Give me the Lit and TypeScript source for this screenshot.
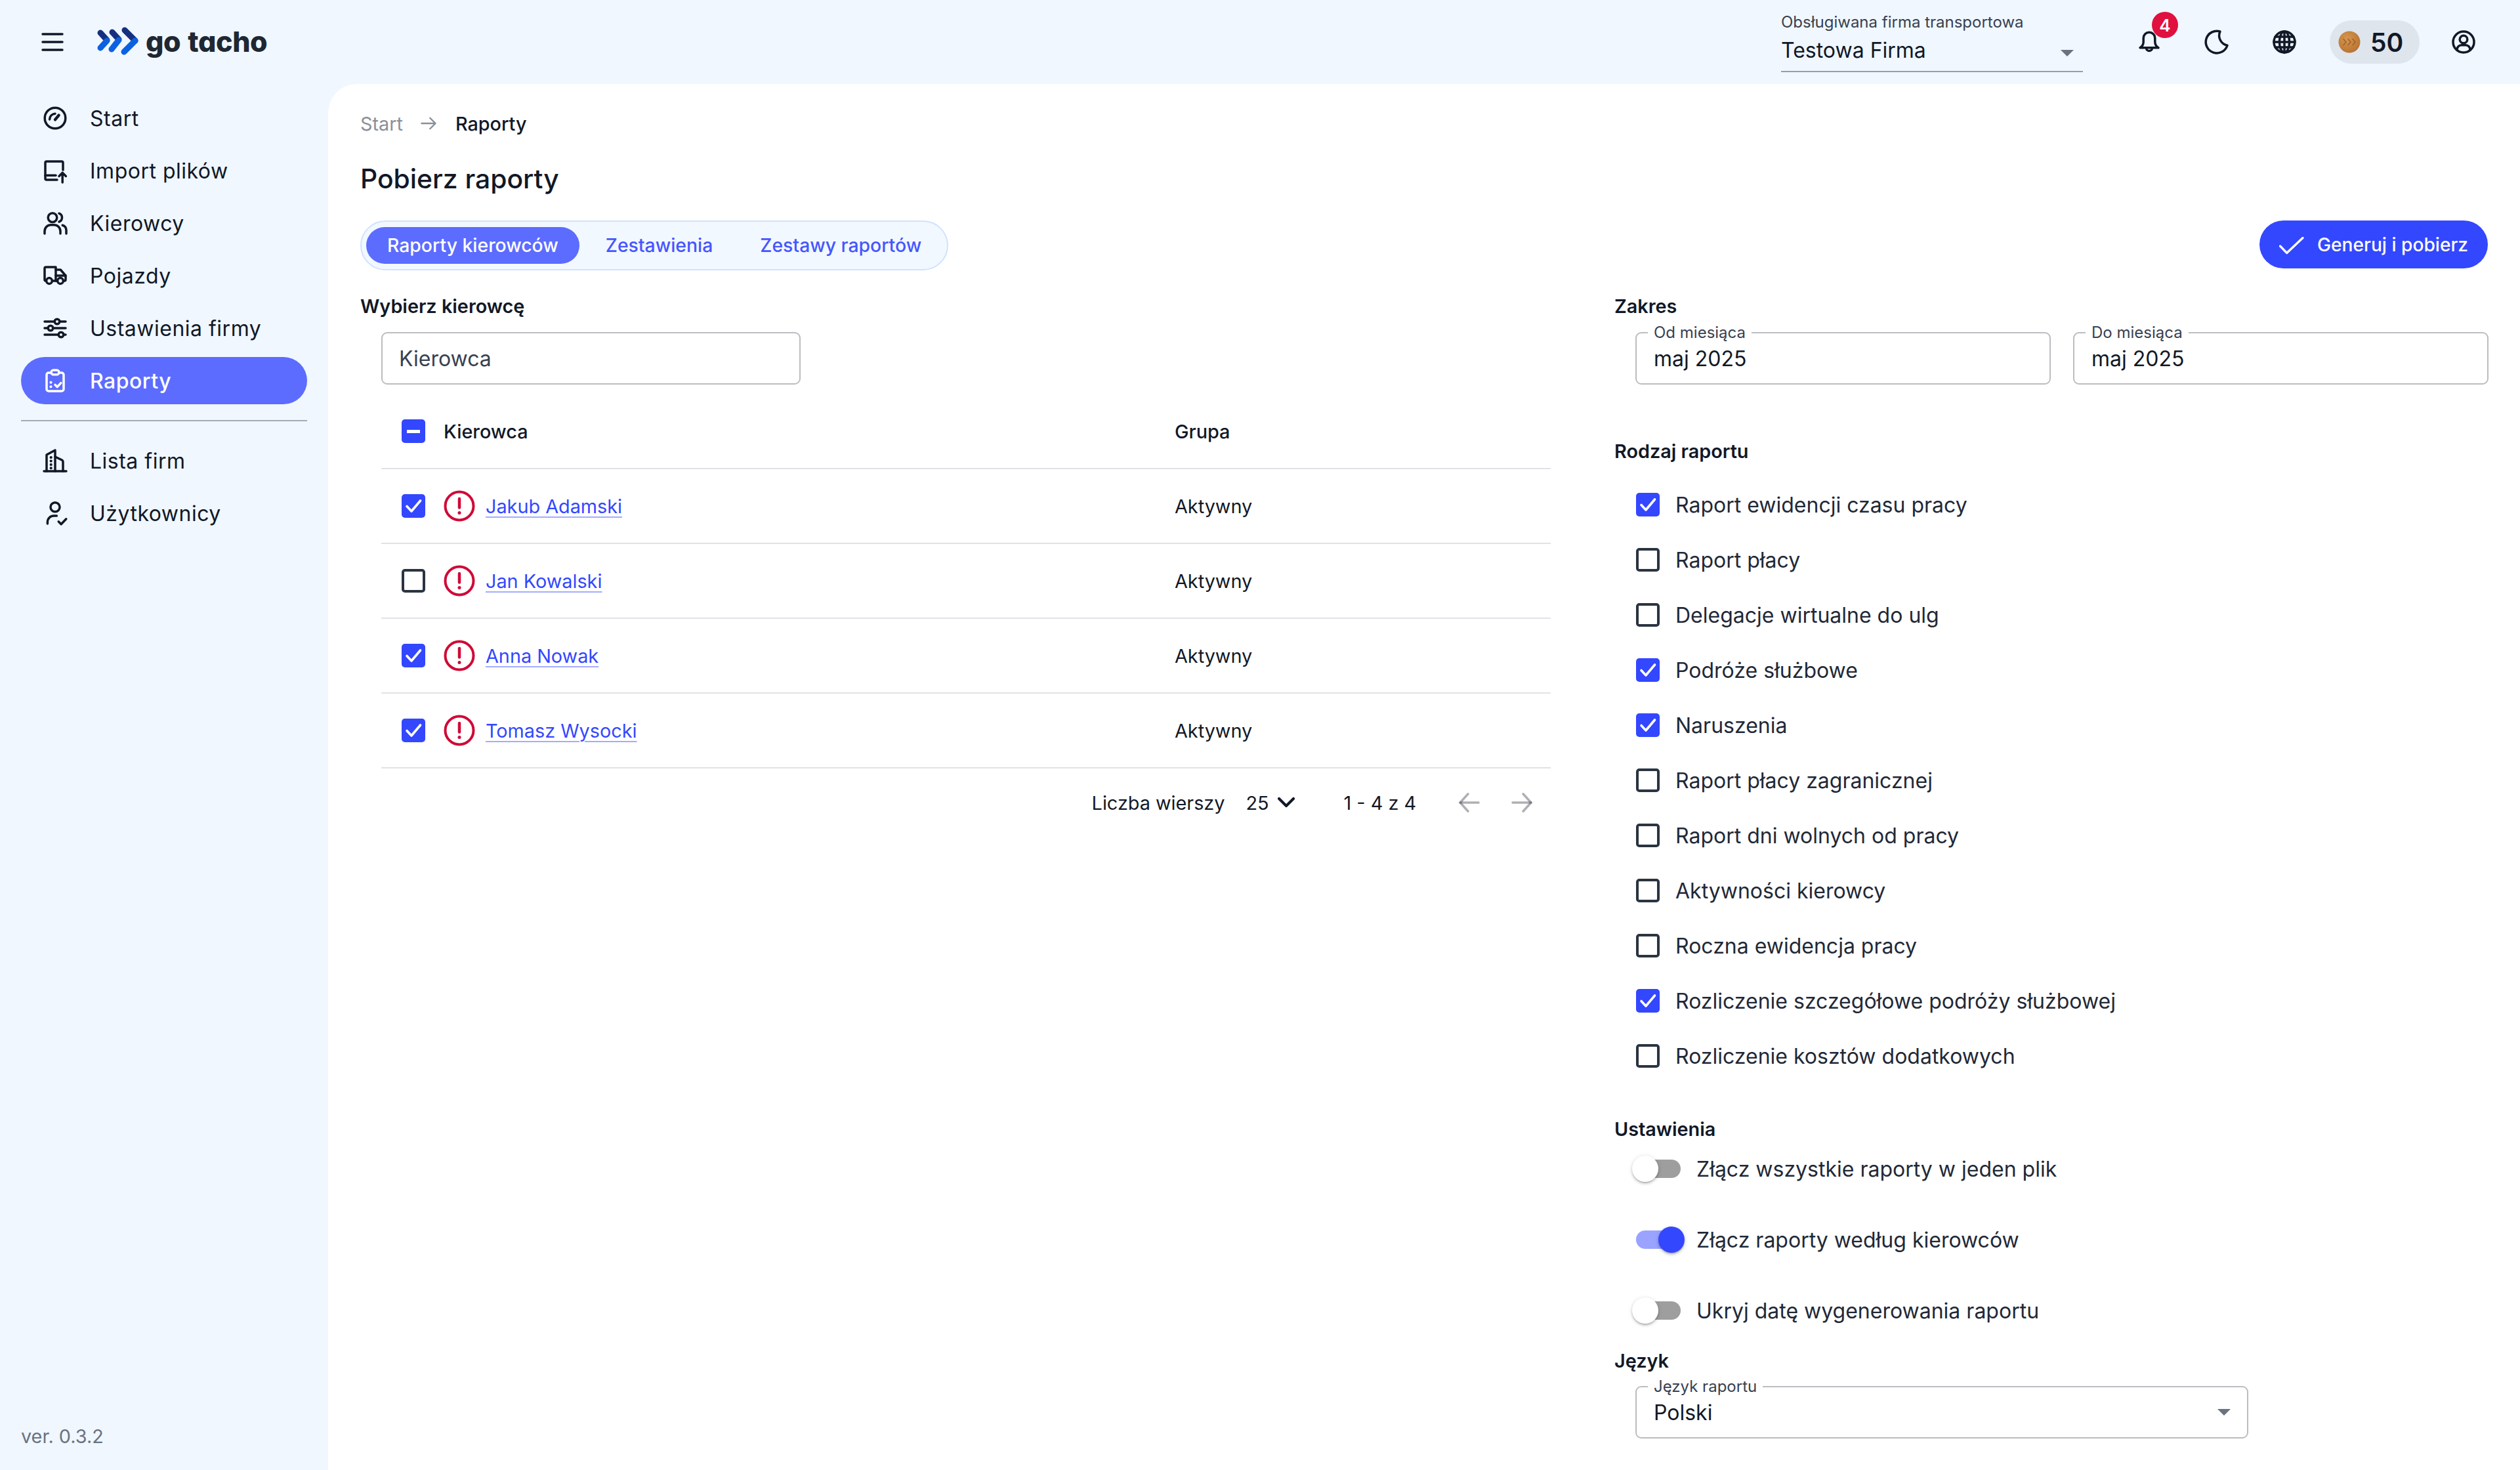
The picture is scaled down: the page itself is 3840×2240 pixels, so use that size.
import { LitElement, html, css, svg } from "lit";
import { customElement } from "lit/decorators.js";

const icon = (body: unknown, cls = "") =>
  html`<svg class="ico ${cls}" viewBox="0 0 24 24" fill="none" stroke="currentColor" stroke-width="1.75" stroke-linecap="round" stroke-linejoin="round">${body}</svg>`;

const I = {
  menu: svg`<path d="M4.5 6h15M4.5 12h15M4.5 18h15"/>`,
  gauge: svg`<circle cx="12" cy="12" r="7.9"/><path d="M7.8 13a4.4 4.4 0 0 1 4.2-4.4"/><path d="M12 13.2l2.8-3.4" stroke-width="2.2"/>`,
  upload: svg`<path d="M18 11.5V6a1 1 0 0 0-1-1H5.5a1 1 0 0 0-1 1v12a1 1 0 0 0 1 1h8"/><path d="M4.5 15.6h8"/><path d="M17.6 21v-7.4M15 16.2l2.6-2.6 2.6 2.6"/>`,
  people: svg`<circle cx="10" cy="7.8" r="3.4"/><path d="M15 4.6a3.4 3.4 0 0 1 0 6.4"/><path d="M4 20v-1.8a4.8 4.8 0 0 1 4.8-4.8h2.4a4.8 4.8 0 0 1 4.8 4.8V20"/><path d="M17.6 13.6a4 4 0 0 1 2.9 3.7V20"/>`,
  truck: svg`<path d="M5.3 16H5a1 1 0 0 1-1-1V6.5a1 1 0 0 1 1-1h7.5V16H9.7"/><path d="M12.5 7.5h3.6l3.9 4.5v3a1 1 0 0 1-1 1h-.8"/><path d="M12.5 12H20"/><path d="M12.5 16h1.3"/><circle cx="7.5" cy="16" r="2.2"/><circle cx="16" cy="16" r="2.2"/>`,
  sliders: svg`<path d="M4 7h7.6M15.4 7H20M4 12h2.6M10.4 12H20M4 17h10.6M18.4 17H20"/><circle cx="13.5" cy="7" r="1.9"/><circle cx="8.5" cy="12" r="1.9"/><circle cx="16.5" cy="17" r="1.9"/>`,
  clip: svg`<path d="M9 6H7a1.5 1.5 0 0 0-1.5 1.5v11A1.5 1.5 0 0 0 7 20h10a1.5 1.5 0 0 0 1.5-1.5v-11A1.5 1.5 0 0 0 17 6h-2"/><rect x="9" y="4" width="6" height="3.4" rx="1.7"/><path d="M12 15.2l1.6 1.6 2.8-3" /><path d="M8.7 13.4h.1M8.7 16.6h.1" stroke-width="2"/>`,
  building: svg`<path d="M3.5 20h17"/><path d="M5.5 20V7.5L12 4v16"/><path d="M12 9l5.2 2.5a1.5 1.5 0 0 1 .8 1.3V20"/><path d="M8.8 9.5h.1M8.8 12.2h.1M8.8 15h.1M8.8 17.6h.1" stroke-width="2"/>`,
  usercheck: svg`<circle cx="12" cy="7.4" r="3.5"/><path d="M6.2 20v-1.2A4.8 4.8 0 0 1 11 14h2.2"/><path d="M14.6 18.4l2 2 3.8-4"/>`,
  bell: svg`<path d="M5 16.4c1.8-1 2.6-2.6 2.6-4.6V9a4.4 4.4 0 0 1 8.8 0v2.8c0 2 .8 3.6 2.6 4.6z"/><path d="M9.8 16.6a2.2 2.2 0 0 0 4.4 0"/>`,
  moon: svg`<path d="M14.5 4a8.4 8.4 0 1 0 5.5 10.6A7.6 7.6 0 0 1 14.5 4z"/>`,
  globe: svg`<circle cx="12" cy="12" r="8"/><path d="M4 12h16M5 8h14M5 16h14M12 4v16"/><ellipse cx="12" cy="12" rx="3.8" ry="8"/>`,
  user: svg`<circle cx="12" cy="12" r="8"/><circle cx="12" cy="10" r="2.9"/><path d="M7 18.2v-.4a3.4 3.4 0 0 1 3.4-3.4h3.2a3.4 3.4 0 0 1 3.4 3.4v.4"/>`,
  alert: svg`<circle cx="12" cy="12" r="8.6" stroke-width="1.6"/><path d="M12 7.6v5.4" stroke-width="1.8"/><path d="M12 16.2h.01" stroke-width="2"/>`,
  down: svg`<path d="M6.5 9l5.5 5.5L17.5 9" stroke-width="2.1"/>`,
  left: svg`<path d="M5 12h14" stroke-opacity=".34"/><path d="M11 5.4L5 12l6 6.6" stroke-opacity=".34"/>`,
  right: svg`<path d="M5 12h14" stroke-opacity=".34"/><path d="M13 5.4l6 6.6-6 6.6" stroke-opacity=".34"/>`,
  arrow: svg`<path d="M5 12h14M13.5 6.5L19 12l-5.5 5.5" stroke-width="1.6"/>`,
  check: svg`<path d="M3.8 13l5 5.2L21 6.8" stroke-width="1.7"/>`,
};

const Logo = html`<svg class="logo" viewBox="0 0 70 52" fill="none" stroke-linecap="round" stroke-linejoin="round">
  <g stroke="#16307f" stroke-width="9">
    <path d="M7 12l10 11"/><path d="M25 11l10 11"/><path d="M44 8l16 16"/>
  </g>
  <g stroke="#0b62e0" stroke-width="9">
    <path d="M17 24L7 35"/><path d="M35 23L24 37"/><path d="M60 24L43 41"/>
  </g>
</svg>`;

const Coin = html`<svg class="coin" viewBox="0 0 34 34" fill="none">
  <defs><radialGradient id="cg" cx=".4" cy=".35" r=".75"><stop offset="0" stop-color="#d6974f"/><stop offset="1" stop-color="#b56f2e"/></radialGradient></defs>
  <circle cx="17" cy="17" r="16.5" fill="url(#cg)"/>
  <path d="M8 12.5l4 4.5-4 4.5M15 12.5l4 4.5-4 4.5M22 12.5l4 4.5-4 4.5" stroke="#a4622a" stroke-width="1.8" stroke-linecap="round" stroke-linejoin="round"/>
</svg>`;

const nav1 = [
  ["Start", I.gauge], ["Import plików", I.upload], ["Kierowcy", I.people],
  ["Pojazdy", I.truck], ["Ustawienia firmy", I.sliders], ["Raporty", I.clip],
] as const;
const nav2 = [["Lista firm", I.building], ["Użytkownicy", I.usercheck]] as const;

const drivers = [
  ["Jakub Adamski", true], ["Jan Kowalski", false], ["Anna Nowak", true], ["Tomasz Wysocki", true],
] as const;

const reports = [
  ["Raport ewidencji czasu pracy", true], ["Raport płacy", false], ["Delegacje wirtualne do ulg", false],
  ["Podróże służbowe", true], ["Naruszenia", true], ["Raport płacy zagranicznej", false],
  ["Raport dni wolnych od pracy", false], ["Aktywności kierowcy", false], ["Roczna ewidencja pracy", false],
  ["Rozliczenie szczegółowe podróży służbowej", true], ["Rozliczenie kosztów dodatkowych", false],
] as const;

const switches = [
  ["Złącz wszystkie raporty w jeden plik", false], ["Złącz raporty według kierowców", true], ["Ukryj datę wygenerowania raportu", false],
] as const;

const box = (state: "on" | "off" | "mixed") => html`<span class="cb ${state}">
  ${state === "on" ? html`<svg viewBox="0 0 36 36" fill="none"><path d="M8 18.5l7 7.5L28.5 10" stroke="#fff" stroke-width="3.6" stroke-linecap="round" stroke-linejoin="round"/></svg>` : ""}
  ${state === "mixed" ? html`<i class="dash"></i>` : ""}
</span>`;

@customElement("app-root")
export class AppRoot extends LitElement {
  static styles = css`
    :host { display: block; width: 3840px; height: 2240px; overflow: hidden; background: #f0f7ff; color: #111827; font-family: Inter, "Noto Sans", sans-serif; font-size: 28.8px; }
    * { box-sizing: border-box; }
    .ico { width: 48px; height: 48px; flex: none; display: block; }

    .top { height: 128px; display: flex; align-items: center; color: #111827; }
    .burger { margin-left: 56px; }
    .logo { width: 70px; height: 52px; margin-left: 42px; flex: none; }
    .brand { margin-left: 6px; margin-top: -3px; font-family: Inter, sans-serif; font-feature-settings: "cv11" 1; font-weight: 800; font-size: 43px; line-height: 60px; color: #1f2733; letter-spacing: -.4px; word-spacing: 2px; }
    .sel { margin-left: auto; width: 460px; height: 110px; padding-top: 16px; align-self: flex-start; border-bottom: 2.4px solid #9a9da3; display: flex; flex-direction: column; }
    .sel .lb { font-size: 24px; line-height: 36px; color: #374151; }
    .sel .val { font-size: 32px; line-height: 50px; display: flex; align-items: center; }
    .caret { width: 0; height: 0; border-left: 10px solid transparent; border-right: 10px solid transparent; border-top: 10px solid #6b7280; margin-left: auto; flex: none; }
    .sel .caret { margin-right: 14px; margin-top: 8px; }
    .tb { width: 103px; height: 128px; display: flex; align-items: center; justify-content: center; flex: none; position: relative; }
    .tb.first { margin-left: 49px; }
    .badge { position: absolute; left: 56px; top: 18px; width: 40px; height: 40px; border-radius: 50%; background: #e0103f; color: #fff; font-size: 26px; font-weight: 600; display: flex; align-items: center; justify-content: center; }
    .pill { margin-left: 18px; width: 137px; height: 66px; border-radius: 33px; background: #dfe5ed; display: flex; align-items: center; padding-left: 13px; gap: 15px; flex: none; }
    .coin { width: 34px; height: 34px; flex: none; }
    .pill b { font-size: 39px; font-weight: 600; line-height: 1; }
    .tb.last { margin-left: 15px; margin-right: 35px; }

    .body { display: grid; grid-template-columns: 500px 1fr; height: 2112px; }
    .side { padding: 16px 32px 33px; display: flex; flex-direction: column; }
    .item { height: 72px; margin-bottom: 8px; border-radius: 36px; display: flex; align-items: center; padding-left: 28px; font-size: 32px; gap: 29px; color: #111827; letter-spacing: .5px; }
    .item.active { background: #5c6cff; color: #fff; font-weight: 500; }
    .rule { height: 2.4px; background: #a9abb2; margin: 16px 0 24px; flex: none; }
    .ver { margin-top: auto; font-size: 28.8px; line-height: 36px; color: #6b7280; }

    .main { background: #fff; border-top-left-radius: 44px; padding: 40px 49px 0; }
    .crumb { height: 40px; display: flex; align-items: center; color: #8a9099; }
    .crumb .ico { width: 36px; height: 36px; margin: 0 23px 0 21px; }
    .crumb b { color: #111827; font-weight: 500; }
    h1 { margin: 36px 0 0; font-size: 40.8px; line-height: 56px; font-weight: 500; }
    .bar { margin-top: 36px; display: flex; justify-content: space-between; align-items: flex-start; }
    .tabs { height: 76px; padding: 0 7px; border: 2.4px solid #cfe3ff; background: #f2f8ff; border-radius: 38px; display: flex; align-items: center; gap: 8px; }
    .tab { height: 56px; padding: 0 32px; border-radius: 28px; display: flex; align-items: center; font-weight: 500; font-size: 28.35px; color: #4556ff; }
    .tab.active { background: #5c6cff; color: #fff; }
    .go { width: 348px; height: 73px; border-radius: 37px; background: #3347ff; color: #fff; display: flex; align-items: center; padding-left: 24px; gap: 16px; font-weight: 500; font-size: 28.15px; }

    .cols { margin-top: 35px; display: grid; grid-template-columns: 1814px 1331px; column-gap: 97px; }
    h2 { margin: 0; height: 40px; font-size: 28.8px; line-height: 40px; font-weight: 600; }
    .ind { padding-left: 32px; }
    .search { margin-top: 19px; width: 639px; height: 80px; border: 2.4px solid #bcbdc0; border-radius: 9px; display: flex; align-items: center; padding-left: 25px; font-size: 32px; color: #374151; }
    .table { margin-top: 15px; }
    .row { height: 114px; border-bottom: 2.4px solid #e0e2e6; display: flex; align-items: center; }
    .cell { width: 1209px; display: flex; align-items: center; padding-left: 31px; flex: none; }
    .cb { width: 36px; height: 36px; border-radius: 5px; display: block; flex: none; position: relative; }
    .cb svg { display: block; width: 36px; height: 36px; }
    .cb.on, .cb.mixed { background: #3347ff; }
    .cb.off { border: 4.8px solid #2b3441; }
    .dash { position: absolute; left: 8px; right: 8px; top: 15.5px; height: 5px; background: #fff; display: block; }
    .hd, .hd2 { font-weight: 500; }
    .hd { margin-left: 28px; }
    .al { color: #cf0a37; margin-left: 22px; width: 60px; height: 60px; margin-right: 10px; }
    a { color: #3347ff; text-decoration: underline; text-decoration-color: #a4acff; text-decoration-thickness: 2.4px; text-underline-offset: 5px; }
    .pager { height: 104px; display: flex; align-items: center; justify-content: flex-end; padding-right: 20px; }
    .pager .ps { margin-left: 32px; }
    .pager .dn { margin-left: 2px; }
    .pager .rg { margin-left: 64px; }
    .pager .pv { margin-left: 57px; }
    .pager .nx { margin-left: 32px; }

    .fields { margin-top: 19px; display: grid; grid-template-columns: 633px 633px; gap: 34px; }
    .field { position: relative; height: 80px; border: 2.4px solid #bcbdc0; border-radius: 9px; display: flex; align-items: center; padding-left: 26px; font-size: 32px; }
    .field.lang { margin-top: 18px; width: 934px; }
    .field .cap { position: absolute; left: 17px; top: -15.5px; padding: 0 9px; background: #fff; font-size: 24px; line-height: 28px; color: #374151; }
    .field .caret { margin-right: 25px; }
    h2.r { margin-top: 82px; }
    .list { margin-top: 19px; padding-left: 33px; }
    .chk { height: 84px; display: flex; align-items: center; gap: 24px; font-size: 32px; color: #1f2937; }
    h2.s { margin-top: 50px; }
    .sws { display: flex; flex-direction: column; gap: 28px; }
    .sw { height: 80px; display: flex; align-items: center; font-size: 32px; color: #1f2937; }
    .tog { position: relative; width: 68px; height: 28px; border-radius: 14px; background: #9e9e9e; margin-left: 1px; margin-right: 24px; flex: none; }
    .tog i { position: absolute; top: -6px; left: -6px; width: 40px; height: 40px; border-radius: 50%; background: #fff; box-shadow: 0 2.4px 2.4px -1px rgba(0,0,0,.2), 0 2.4px 4px rgba(0,0,0,.14), 0 1px 7px rgba(0,0,0,.12); }
    .tog.on { background: #9aa3ff; }
    .tog.on i { left: 34px; background: #3347ff; }
    h2.l { margin-top: 17px; }
  `;

  render() {
    const navItem = ([label, ic]: readonly [string, unknown]) =>
      html`<div class="item ${label === "Raporty" ? "active" : ""}">${icon(ic)}<span>${label}</span></div>`;
    return html`
      <header class="top">
        ${icon(I.menu, "burger")}
        ${Logo}
        <span class="brand">go tacho</span>
        <div class="sel">
          <span class="lb">Obsługiwana firma transportowa</span>
          <span class="val">Testowa Firma<span class="caret"></span></span>
        </div>
        <div class="tb first">${icon(I.bell)}<span class="badge">4</span></div>
        <div class="tb">${icon(I.moon)}</div>
        <div class="tb">${icon(I.globe)}</div>
        <div class="pill">${Coin}<b>50</b></div>
        <div class="tb last">${icon(I.user)}</div>
      </header>
      <div class="body">
        <aside class="side">
          ${nav1.map(navItem)}
          <div class="rule"></div>
          ${nav2.map(navItem)}
          <div class="ver">ver. 0.3.2</div>
        </aside>
        <main class="main">
          <div class="crumb"><span>Start</span>${icon(I.arrow)}<b>Raporty</b></div>
          <h1>Pobierz raporty</h1>
          <div class="bar">
            <div class="tabs">
              <div class="tab active">Raporty kierowców</div>
              <div class="tab">Zestawienia</div>
              <div class="tab">Zestawy raportów</div>
            </div>
            <div class="go">${icon(I.check)}<span>Generuj i pobierz</span></div>
          </div>
          <div class="cols">
            <section>
              <h2>Wybierz kierowcę</h2>
              <div class="ind">
                <div class="search">Kierowca</div>
                <div class="table">
                  <div class="row">
                    <div class="cell">${box("mixed")}<span class="hd">Kierowca</span></div>
                    <span class="hd2">Grupa</span>
                  </div>
                  ${drivers.map(([n, c]) => html`<div class="row">
                    <div class="cell">${box(c ? "on" : "off")}${icon(I.alert, "al")}<a href="#">${n}</a></div>
                    <span>Aktywny</span>
                  </div>`)}
                </div>
                <div class="pager">
                  <span>Liczba wierszy</span>
                  <span class="ps">25</span>
                  ${icon(I.down, "dn")}
                  <span class="rg">1 - 4 z 4</span>
                  ${icon(I.left, "pv")}
                  ${icon(I.right, "nx")}
                </div>
              </div>
            </section>
            <section>
              <h2>Zakres</h2>
              <div class="ind">
                <div class="fields">
                  <div class="field"><span class="cap">Od miesiąca</span>maj 2025</div>
                  <div class="field"><span class="cap">Do miesiąca</span>maj 2025</div>
                </div>
              </div>
              <h2 class="r">Rodzaj raportu</h2>
              <div class="ind list">
                ${reports.map(([t, c]) => html`<div class="chk">${box(c ? "on" : "off")}<span>${t}</span></div>`)}
              </div>
              <h2 class="s">Ustawienia</h2>
              <div class="ind sws">
                ${switches.map(([t, c]) => html`<div class="sw"><span class="tog ${c ? "on" : ""}"><i></i></span><span>${t}</span></div>`)}
              </div>
              <h2 class="l">Język</h2>
              <div class="ind">
                <div class="field lang"><span class="cap">Język raportu</span>Polski<span class="caret"></span></div>
              </div>
            </section>
          </div>
        </main>
      </div>
    `;
  }
}
